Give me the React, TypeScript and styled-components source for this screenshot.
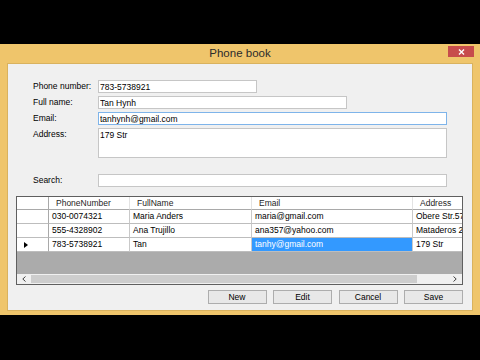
import React from "react";
import styled, { createGlobalStyle } from "styled-components";

const GlobalStyle = createGlobalStyle`
  html, body {
    margin: 0;
    padding: 0;
    background: #000;
  }
  body {
    font-family: "Liberation Sans", Arial, sans-serif;
  }
`;

const Page = styled.div`
  width: 480px;
  height: 360px;
  padding-top: 44px;
  box-sizing: border-box;
  background: #000;
`;

const Window = styled.div`
  height: 271px;
  box-sizing: border-box;
  display: flex;
  flex-direction: column;
  padding: 0 7px 6px 7px;
  background: #efc56b;
`;

const TitleBar = styled.div`
  height: 19px;
  margin: 0 -7px;
  display: grid;
  grid-template-columns: 1fr auto 1fr;
  align-items: start;
  & h1 {
    margin: 0;
    grid-column: 2;
    font-family: "Liberation Sans", Arial, sans-serif;
    font-weight: normal;
    font-size: 11.5px;
    line-height: 19px;
    color: #2b2b2b;
  }
`;

const CloseButton = styled.div`
  grid-column: 3;
  justify-self: end;
  margin: 2px 6px 0 0;
  width: 26px;
  height: 11px;
  background: #c74c4c;
  display: flex;
  align-items: center;
  justify-content: center;
`;

const Client = styled.div`
  flex: 1;
  display: flex;
  flex-direction: column;
  box-sizing: border-box;
  padding: 16px 9px 6px 8px;
  background: #f0f0f0;
  border: 1px solid #d9b25e;
  font-size: 8.5px;
  color: #000;
`;

const Form = styled.div`
  display: grid;
  grid-template-columns: 65px 1fr;
  row-gap: 3px;
  padding-left: 17px;
  align-items: center;
`;

const Label = styled.label<{ $top?: boolean; $gap?: boolean }>`
  font-size: 8.5px;
  line-height: 13px;
  align-self: ${({ $top }) => ($top ? "start" : "center")};
  margin-top: ${({ $gap }) => ($gap ? "13px" : "0")};
`;

const TextBox = styled.input<{ $width: number; $focus?: boolean; $gap?: boolean }>`
  width: ${({ $width }) => $width}px;
  height: 13px;
  box-sizing: border-box;
  margin: ${({ $gap }) => ($gap ? "13px" : "0")} 0 0 0;
  padding: 0 1px;
  border: 1px solid ${({ $focus }) => ($focus ? "#7eb4ea" : "#c6c6c6")};
  background: #fff;
  font-family: "Liberation Sans", Arial, sans-serif;
  font-size: 8.5px;
  color: #000;
  outline: none;
`;

const TextArea = styled.textarea`
  width: 349px;
  height: 30px;
  box-sizing: border-box;
  margin: 0;
  padding: 1px 1px;
  border: 1px solid #c6c6c6;
  background: #fff;
  font-family: "Liberation Sans", Arial, sans-serif;
  font-size: 8.5px;
  line-height: 11px;
  resize: none;
  overflow: hidden;
  outline: none;
`;

const COLS = "32px 81px 122px 161px 90px";

const Grid = styled.div`
  margin-top: 9px;
  height: 89px;
  box-sizing: border-box;
  border: 1px solid #5f5f5f;
  background: #ababab;
  display: flex;
  flex-direction: column;
  overflow: hidden;
`;

const Row = styled.div<{ $header?: boolean }>`
  display: grid;
  grid-template-columns: ${COLS};
  height: ${({ $header }) => ($header ? 13 : 14)}px;
`;

const Cell = styled.div<{ $header?: boolean; $selected?: boolean }>`
  box-sizing: border-box;
  padding-left: ${({ $header }) => ($header ? 7 : 3)}px;
  border-right: 1px solid ${({ $header }) => ($header ? "#e3e3e3" : "#c9c9c9")};
  border-bottom: 1px solid ${({ $header }) => ($header ? "#a9a9a9" : "#bdbdbd")};
  background: ${({ $selected }) => ($selected ? "#3399ff" : "#fff")};
  color: ${({ $selected, $header }) => ($selected ? "#fff" : $header ? "#1e1e1e" : "#000")};
  font-size: 8.5px;
  line-height: 12px;
  white-space: nowrap;
  overflow: hidden;
`;

const RowHeader = styled(Cell)`
  padding-left: 7px;
  border-right-color: #a9a9a9;
  display: flex;
  align-items: center;
`;

const Filler = styled.div`
  flex: 1;
`;

const HScroll = styled.div`
  height: 10px;
  display: flex;
  background: #f0f0f0;
`;

const ScrollArrow = styled.div`
  width: 14px;
  display: flex;
  align-items: center;
  justify-content: center;
`;

const Thumb = styled.div`
  width: 386px;
  margin: 1px 0;
  background: #cdcdcd;
`;

const ButtonRow = styled.div`
  margin-top: 5px;
  display: flex;
  justify-content: flex-end;
  gap: 6.5px;
`;

const Button = styled.button`
  width: 59px;
  height: 14px;
  box-sizing: border-box;
  padding: 0;
  border: 1px solid #adadad;
  background: #e8e8e8;
  font-family: "Liberation Sans", Arial, sans-serif;
  font-size: 8.5px;
  color: #000;
`;

const rows = [
  { phone: "030-0074321", name: "Maria Anders", email: "maria@gmail.com", address: "Obere Str.57" },
  { phone: "555-4328902", name: "Ana Trujillo", email: "ana357@yahoo.com", address: "Mataderos 2312" },
  { phone: "783-5738921", name: "Tan", email: "tanhy@gmail.com", address: "179 Str", current: true },
];

export default function App() {
  return (
    <Page>
      <GlobalStyle />
      <Window>
        <TitleBar>
          <h1>Phone book</h1>
          <CloseButton>
            <svg width="7" height="6" viewBox="0 0 7 6">
              <path d="M1 0.5 L6 5.5 M6 0.5 L1 5.5" stroke="#fff" strokeWidth="1.4" />
            </svg>
          </CloseButton>
        </TitleBar>
        <Client>
          <Form>
            <Label>Phone number:</Label>
            <TextBox $width={159} defaultValue="783-5738921" readOnly />
            <Label>Full name:</Label>
            <TextBox $width={249} defaultValue="Tan Hynh" readOnly />
            <Label>Email:</Label>
            <TextBox $width={349} $focus defaultValue="tanhynh@gmail.com" readOnly />
            <Label $top>Address:</Label>
            <TextArea defaultValue="179 Str" readOnly />
            <Label $gap>Search:</Label>
            <TextBox $width={349} $gap readOnly />
          </Form>
          <Grid>
            <Row $header>
              <RowHeader $header />
              <Cell $header>PhoneNumber</Cell>
              <Cell $header>FullName</Cell>
              <Cell $header>Email</Cell>
              <Cell $header>Address</Cell>
            </Row>
            {rows.map((r) => (
              <Row key={r.phone}>
                <RowHeader>
                  {r.current && (
                    <svg width="4" height="6" viewBox="0 0 4 6">
                      <path d="M0 0 L4 3 L0 6 Z" fill="#000" />
                    </svg>
                  )}
                </RowHeader>
                <Cell>{r.phone}</Cell>
                <Cell>{r.name}</Cell>
                <Cell $selected={r.current}>{r.email}</Cell>
                <Cell>{r.address}</Cell>
              </Row>
            ))}
            <Filler />
            <HScroll>
              <ScrollArrow>
                <svg width="4" height="6" viewBox="0 0 4 6">
                  <path d="M3.5 0.5 L0.8 3 L3.5 5.5" stroke="#404040" strokeWidth="1" fill="none" />
                </svg>
              </ScrollArrow>
              <Thumb />
              <Filler />
              <ScrollArrow>
                <svg width="4" height="6" viewBox="0 0 4 6">
                  <path d="M0.5 0.5 L3.2 3 L0.5 5.5" stroke="#404040" strokeWidth="1" fill="none" />
                </svg>
              </ScrollArrow>
            </HScroll>
          </Grid>
          <ButtonRow>
            <Button>New</Button>
            <Button>Edit</Button>
            <Button>Cancel</Button>
            <Button>Save</Button>
          </ButtonRow>
        </Client>
      </Window>
    </Page>
  );
}
